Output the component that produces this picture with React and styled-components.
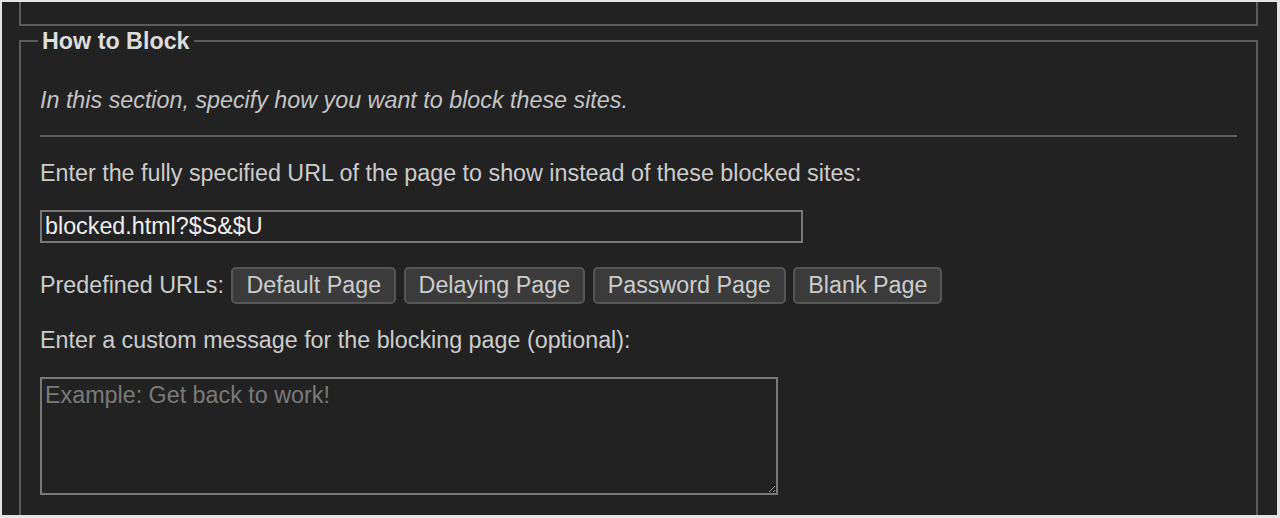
import React from "react";
import styled, { createGlobalStyle } from "styled-components";

const Global = createGlobalStyle`
  html, body {
    margin: 0;
    padding: 0;
    background: #e4e4e4;
  }
  body {
    font-family: "Liberation Sans", Arial, sans-serif;
  }
`;

const Frame = styled.div`
  margin: 2px 3px 0 2px;
  height: 513px;
  background: #222222;
  overflow: hidden;
  padding: 0 19px 0 17px;
  box-sizing: border-box;
  font-size: 23.3px;
  color: #cccccc;
`;

const PrevBox = styled.div`
  height: 22px;
  border: 2px solid #5c5c5c;
  border-top: none;
`;

const Fieldset = styled.fieldset`
  margin: 1.5px 0 0;
  border: 2px solid #5c5c5c;
  padding: 32px 19px 40px 19px;
  min-width: 0;
`;

const Legend = styled.legend`
  padding: 0 4px;
  margin-left: -2px;
  font-weight: bold;
  color: #dddddd;
  line-height: 27px;
`;

const Content = styled.div`
  display: flex;
  flex-direction: column;
  align-items: flex-start;
  gap: 23.3px;
`;

const Intro = styled.p`
  margin: 0;
  font-style: italic;
  color: #c4c4c4;
  line-height: 27px;
`;

const Rule = styled.div`
  align-self: stretch;
  height: 2px;
  margin-top: -2px;
  background: #5c5c5c;
`;

const Text = styled.p`
  margin: 0;
  line-height: 27px;
`;

const UrlInput = styled.input`
  width: 763px;
  height: 33px;
  box-sizing: border-box;
  border: 2px solid #787878;
  background: #222222;
  color: #eeeeee;
  font-family: "Liberation Sans", Arial, sans-serif;
  font-size: 23.3px;
  padding: 0 3px;
  margin: 0;
  outline: none;
`;

const Row = styled.div`
  display: flex;
  align-items: center;
  gap: 7.5px;
`;

const Label = styled.span`
  line-height: 27px;
`;

const Button = styled.button`
  height: 37px;
  padding: 0 13px;
  margin: 0;
  background: #3b3b3b;
  border: 2px solid #565656;
  border-radius: 5px;
  color: #cccccc;
  font-family: "Liberation Sans", Arial, sans-serif;
  font-size: 23.3px;
  line-height: 27px;
  cursor: pointer;
`;

const Message = styled.textarea`
  width: 738px;
  height: 118px;
  box-sizing: border-box;
  border: 2px solid #787878;
  background: #222222;
  color: #eeeeee;
  color-scheme: dark;
  font-family: "Liberation Sans", Arial, sans-serif;
  font-size: 23.3px;
  line-height: 27px;
  padding: 3px 3px;
  margin: 0;
  outline: none;
  &::placeholder {
    color: #7a7a7a;
  }
`;

const presets = ["Default Page", "Delaying Page", "Password Page", "Blank Page"];

export default function App() {
  return (
    <>
      <Global />
      <Frame>
        <PrevBox />
        <Fieldset>
          <Legend>How to Block</Legend>
          <Content>
            <Intro>In this section, specify how you want to block these sites.</Intro>
            <Rule />
            <Text>Enter the fully specified URL of the page to show instead of these blocked sites:</Text>
            <UrlInput type="text" defaultValue="blocked.html?$S&$U" />
            <Row>
              <Label>Predefined URLs:</Label>
              {presets.map((p) => (
                <Button key={p}>{p}</Button>
              ))}
            </Row>
            <Text>Enter a custom message for the blocking page (optional):</Text>
            <Message placeholder="Example: Get back to work!" />
          </Content>
        </Fieldset>
      </Frame>
    </>
  );
}
